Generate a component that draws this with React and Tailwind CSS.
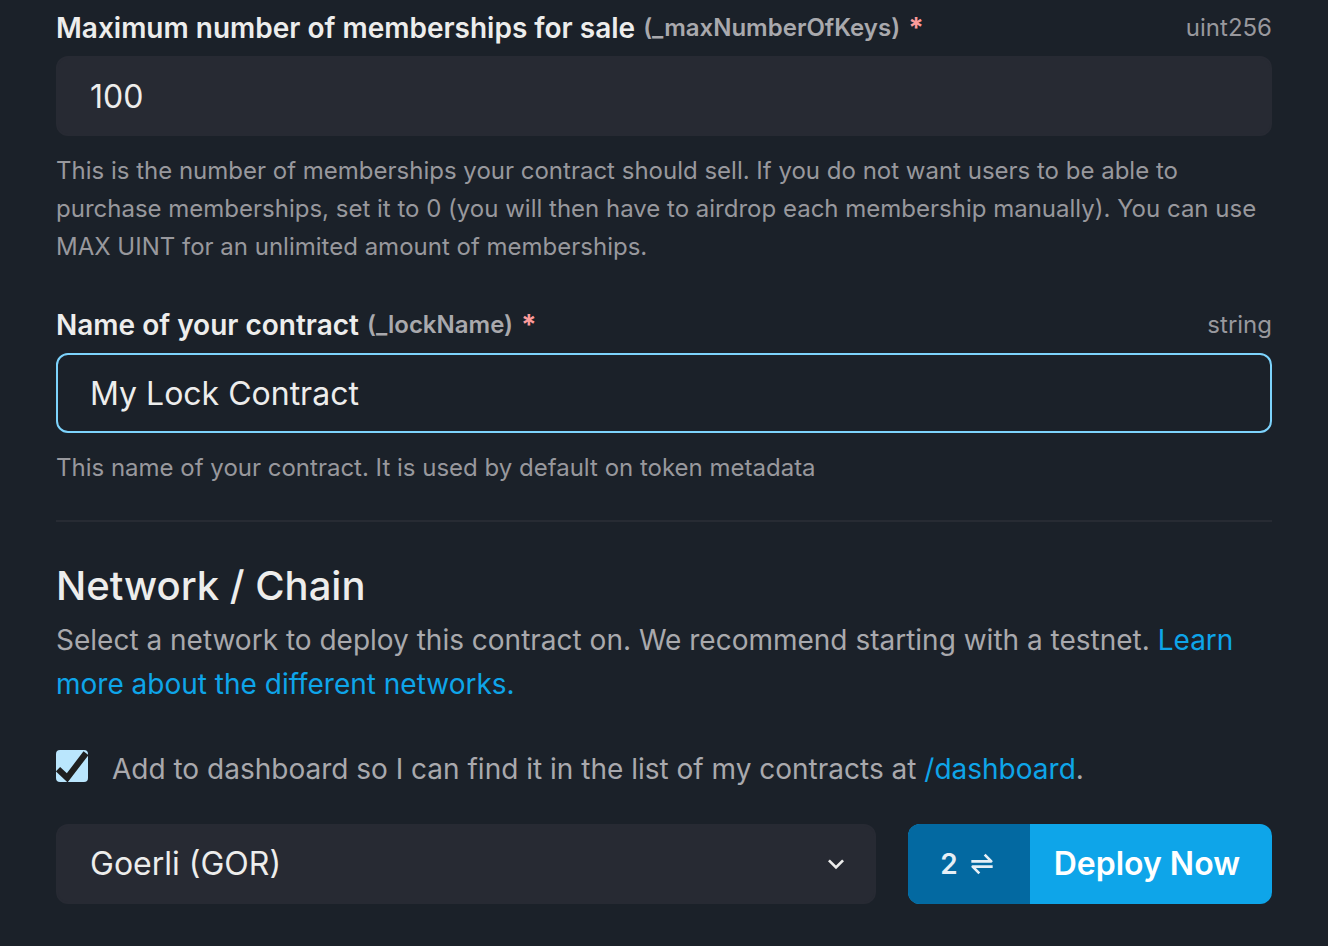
import { useState } from "react";

function Field({ id, label, param, type, help, value, onChange, active }) {
  return (
    <div className="flex flex-col">
      <div className="mb-2 flex h-10 items-center justify-between gap-4">
        <label htmlFor={id} className="flex items-center gap-2 text-[28px] font-semibold text-[#ededec]">
          {label}
          <span className="flex h-10 items-center gap-2 text-2xl text-[#a9a9ad]">
            ({param}) <span className="text-[28px] leading-10 font-bold text-[#fc9b9b]">*</span>
          </span>
        </label>
        <span className="text-2xl text-[#98989d]">{type}</span>
      </div>
      <input
        id={id}
        type="text"
        value={value}
        onChange={(e) => onChange(e.target.value)}
        className={
          "h-20 w-full rounded-xl border-2 px-8 text-[32px] text-[#ededec] outline-none " +
          (active ? "border-[#7dd3fc] bg-[#1b2129]" : "border-[#272a33] bg-[#272a33]")
        }
      />
      <p className="mt-4 text-2xl leading-[38px] text-[#98989d]">{help}</p>
    </div>
  );
}

export default function App() {
  const [keys, setKeys] = useState("100");
  const [name, setName] = useState("My Lock Contract");
  const [add, setAdd] = useState(true);

  return (
    <main className="min-h-screen bg-[#1b2129] px-14 pt-2 pb-10 font-['Inter',sans-serif]">
      <form onSubmit={(e) => e.preventDefault()}>
        <div className="flex flex-col gap-[39px]">
          <Field
            id="max-keys"
            label="Maximum number of memberships for sale"
            param="_maxNumberOfKeys"
            type="uint256"
            value={keys}
            onChange={setKeys}
            help="This is the number of memberships your contract should sell. If you do not want users to be able to purchase memberships, set it to 0 (you will then have to airdrop each membership manually). You can use MAX UINT for an unlimited amount of memberships."
          />
          <Field
            id="lock-name"
            label="Name of your contract"
            param="_lockName"
            type="string"
            value={name}
            onChange={setName}
            active
            help="This name of your contract. It is used by default on token metadata"
          />
        </div>

        <hr className="mt-[33px] border-t-2 border-[#272b33]" />

        <section className="mt-10">
          <h2 className="text-[40px] leading-12 font-medium text-[#ededec]">Network / Chain</h2>
          <p className="mt-2 text-[28px] leading-11 text-[#a9a9ad]">
            Select a network to deploy this contract on. We recommend starting with a testnet.{" "}
            <a href="#networks" className="text-[#0ea5e9]">
              Learn more about the different networks.
            </a>
          </p>
        </section>

        <div className="mt-[41px] flex items-start gap-6">
          <span className="mt-[3px] grid size-8 shrink-0">
            <input
              id="add-dashboard"
              type="checkbox"
              checked={add}
              onChange={(e) => setAdd(e.target.checked)}
              className="col-start-1 row-start-1 size-8 appearance-none rounded-sm border-2 border-[#bae6fd] checked:bg-[#bae6fd]"
            />
            {add && (
              <svg viewBox="0 0 32 32" className="pointer-events-none col-start-1 row-start-1 size-8" fill="none" stroke="#1f1f1f" strokeWidth="6.2">
                <path d="M2 19.2 L11.2 27.8 L30 3.2" />
              </svg>
            )}
          </span>
          <label htmlFor="add-dashboard" className="text-[28px] leading-11 text-[#a9a9ad]">
            Add to dashboard so I can find it in the list of my contracts at{" "}
            <a href="#dashboard" className="text-[#0ea5e9]">
              /dashboard
            </a>
            .
          </label>
        </div>

        <div className="mt-[33px] flex gap-8">
          <div className="grid min-w-0 flex-1 items-center">
            <select
              aria-label="Network"
              className="col-start-1 row-start-1 h-20 w-full appearance-none rounded-xl border-2 border-[#272a33] bg-[#272a33] px-8 text-[32px] text-[#ededec] outline-none"
            >
              <option>Goerli (GOR)</option>
            </select>
            <svg viewBox="0 0 24 24" className="pointer-events-none col-start-1 row-start-1 mr-6 size-8 justify-self-end" fill="#ededec">
              <path d="M16.59 8.59L12 13.17 7.41 8.59 6 10l6 6 6-6z" />
            </svg>
          </div>
          <button type="submit" className="flex h-20 overflow-hidden rounded-xl bg-[#0ea5e9] text-white">
            <span className="flex h-full items-center gap-2 bg-[#0369a1] px-8 text-[28px] font-semibold text-[#e6eff6]">
              2
              <svg viewBox="0 0 24 24" className="size-8" fill="currentColor">
                <path d="M19.924 10.383a1 1 0 0 0-.217-1.09l-5-5-1.414 1.414L16.586 9H4v2h15a1 1 0 0 0 .924-.617zM4.076 13.617a1 1 0 0 0 .217 1.09l5 5 1.414-1.414L7.414 15H20v-2H5a.999.999 0 0 0-.924.617z" />
              </svg>
            </span>
            <span className="flex h-full items-center pr-8 pl-6 text-[32px] font-semibold">Deploy Now</span>
          </button>
        </div>
      </form>
    </main>
  );
}
